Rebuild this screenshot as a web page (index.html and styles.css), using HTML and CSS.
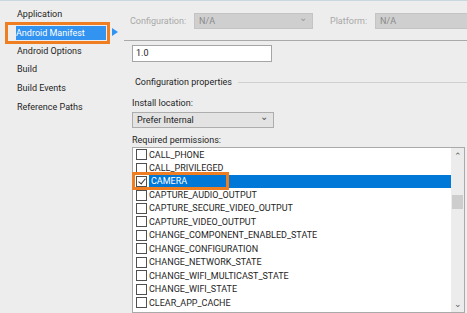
FILE: index.html
```html
<!DOCTYPE html>
<html lang="en">
<head>
    <meta charset="UTF-8">
    <title>Android Manifest</title>
    <link rel="stylesheet" href="styles.css">
</head>
<body>
    <div class="window">
        <ul class="nav">
            <li>Application</li>
            <li class="active"><span class="hl">Android Manifest</span><span class="arrow"></span></li>
            <li>Android Options</li>
            <li>Build</li>
            <li>Build Events</li>
            <li>Reference Paths</li>
        </ul>

        <div class="main">
            <div class="toolbar">
                <span class="dim-label config-label">Configuration:</span>
                <div class="select disabled config">N/A<span class="chev">&#8964;</span></div>
                <span class="dim-label platform-label">Platform:</span>
                <div class="select disabled platform">N/A</div>
            </div>

            <div class="content">
                <div class="textbox">1.0</div>

                <div class="group-title"><span>Configuration properties</span></div>

                <label class="field-label">Install location:</label>
                <div class="select location">Prefer Internal<span class="chev">&#8964;</span></div>

                <label class="field-label perms-label">Required permissions:</label>
                <div class="listbox">
                    <ul class="perms">
                        <li><span class="cb"></span>CALL_PHONE</li>
                        <li><span class="cb"></span>CALL_PRIVILEGED</li>
                        <li class="selected"><span class="cb checked"></span><span class="name">CAMERA</span><span class="mark"></span></li>
                        <li><span class="cb"></span>CAPTURE_AUDIO_OUTPUT</li>
                        <li><span class="cb"></span>CAPTURE_SECURE_VIDEO_OUTPUT</li>
                        <li><span class="cb"></span>CAPTURE_VIDEO_OUTPUT</li>
                        <li><span class="cb"></span>CHANGE_COMPONENT_ENABLED_STATE</li>
                        <li><span class="cb"></span>CHANGE_CONFIGURATION</li>
                        <li><span class="cb"></span>CHANGE_NETWORK_STATE</li>
                        <li><span class="cb"></span>CHANGE_WIFI_MULTICAST_STATE</li>
                        <li><span class="cb"></span>CHANGE_WIFI_STATE</li>
                        <li><span class="cb"></span>CLEAR_APP_CACHE</li>
                    </ul>
                    <div class="scrollbar">
                        <span class="sb-up">&#8963;</span>
                        <span class="sb-thumb"></span>
                        <span class="sb-down">&#8964;</span>
                    </div>
                </div>
            </div>
        </div>
    </div>
</body>
</html>
```

FILE: styles.css
```css
body {
    margin: 0;
    font-family: Roboto, "Noto Sans", sans-serif;
    font-size: 9px;
    color: #1e1e1e;
    background: #ededed;
}
.window {
    display: flex;
    width: 467px;
    height: 313px;
    overflow: hidden;
    border-top: 1px solid #c9d7df;
    box-sizing: border-box;
}
.nav {
    list-style: none;
    margin: 0;
    padding: 3.7px 0 0 0;
    width: 124px;
    flex: none;
}
.nav li {
    height: 18.6px;
    line-height: 18.6px;
    padding-left: 17px;
    position: relative;
}
.nav li.active {
    display: flex;
    align-items: center;
    padding-left: 5px;
}
.nav .hl {
    display: block;
    flex: none;
    width: 105px;
    height: 22px;
    line-height: 14px;
    padding: 1px 1px 1px 8px;
    box-sizing: border-box;
    border: 3px solid #ef7d22;
    background: #3393f0;
    background-clip: content-box;
    color: #fff;
}
.arrow {
    position: absolute;
    left: 112px;
    top: 5px;
    border-left: 6px solid #3393f0;
    border-top: 4px solid transparent;
    border-bottom: 4px solid transparent;
}
.main {
    flex: 1;
    display: flex;
    flex-direction: column;
}
.toolbar {
    display: flex;
    align-items: center;
    height: 40px;
    padding: 0 0 0 6px;
    border-bottom: 1px solid #a9a9a9;
    box-sizing: border-box;
}
.dim-label {
    color: #a8a8a8;
    flex: none;
}
.config-label {
    width: 64px;
}
.platform-label {
    width: 45px;
    margin-left: 17px;
}
.select {
    position: relative;
    height: 16px;
    line-height: 14px;
    padding-left: 4px;
    box-sizing: border-box;
    border: 1px solid #adadad;
    background: #e3e3e3;
}
.select.disabled {
    background: #cfcfcf;
    border-color: #c4c4c4;
    color: #8a8a8a;
}
.select.config {
    width: 119px;
    flex: none;
}
.select.platform {
    flex: 1;
    border-right: none;
}
.chev {
    position: absolute;
    right: 5px;
    top: -3px;
    font-size: 10px;
    color: #555;
}
.disabled .chev {
    color: #9a9a9a;
}
.content {
    padding: 4px 0 0 8px;
}
.textbox {
    width: 140px;
    height: 17px;
    line-height: 15px;
    padding-left: 3px;
    box-sizing: border-box;
    background: #fff;
    border: 1px solid #a5a5a5;
}
.group-title {
    display: flex;
    align-items: center;
    margin: 12px 0 0 3px;
    height: 16px;
}
.group-title::after {
    content: "";
    flex: 1;
    border-top: 1px solid #d0d0d0;
    margin-left: 6px;
}
.field-label {
    display: block;
    margin-top: 6.5px;
    height: 13px;
    line-height: 13px;
}
.perms-label {
    margin-top: 5.5px;
}
.select.location {
    width: 142px;
    margin-top: 2.5px;
    color: #1e1e1e;
}
.listbox {
    display: flex;
    margin-top: 0.5px;
    height: 166px;
    width: 333px;
    box-sizing: border-box;
    background: #fff;
    border: 1px solid #aaaaaa;
}
.perms {
    list-style: none;
    margin: 0;
    padding: 0;
    flex: 1;
}
.perms li {
    position: relative;
    display: flex;
    align-items: center;
    height: 13.45px;
    padding-left: 3px;
    white-space: nowrap;
}
.cb {
    width: 11px;
    height: 11px;
    box-sizing: border-box;
    border: 1px solid #4f4f4f;
    background: #fff;
    margin-right: 2px;
    flex: none;
}
.cb.checked {
    position: relative;
}
.cb.checked::after {
    content: "";
    position: absolute;
    left: 3px;
    top: 0;
    width: 3px;
    height: 6px;
    border: solid #333;
    border-width: 0 1.5px 1.5px 0;
    transform: rotate(40deg);
}
.selected .name {
    flex: 1;
    align-self: stretch;
    background: #0078d7;
    color: #fff;
    line-height: 13.45px;
    padding-left: 2px;
}
.mark {
    position: absolute;
    left: -1px;
    top: -3px;
    width: 97px;
    height: 18px;
    border: 3px solid #ef7d22;
    box-sizing: border-box;
}
.scrollbar {
    width: 13px;
    flex: none;
    background: #ececec;
    position: relative;
}
.sb-up, .sb-down {
    position: absolute;
    left: 3px;
    font-size: 9px;
    color: #606060;
}
.sb-up {
    top: 3px;
}
.sb-down {
    bottom: 3px;
}
.sb-thumb {
    position: absolute;
    left: 1px;
    top: 47px;
    width: 11px;
    height: 14px;
    background: #cdcdcd;
}
```
